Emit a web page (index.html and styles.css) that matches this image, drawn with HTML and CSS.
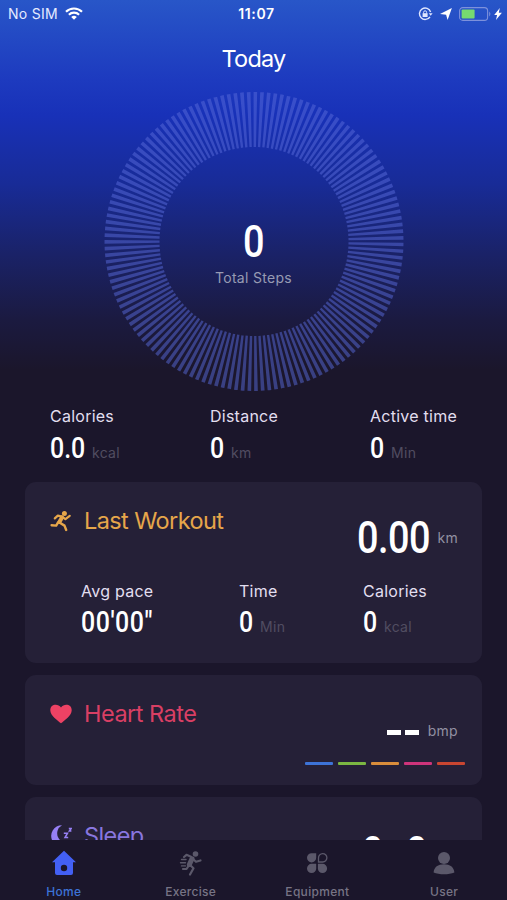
FILE: index.html
```html
<!DOCTYPE html>
<html lang="en">
<head>
  <meta charset="UTF-8" />
  <meta name="viewport" content="width=device-width, initial-scale=1.0" />
  <title>Today</title>
  <link rel="stylesheet" href="styles.css">
</head>
<body>
  <div class="app">
    <div class="screen">
      <div class="status">
        <div class="carrier">
          <span>No SIM</span>
          <svg width="18" height="13" viewBox="0 0 18 13" fill="none" stroke="#fff" stroke-width="2.2">
            <path d="M1 4.8a11.4 11.4 0 0 1 16 0" />
            <path d="M3.9 7.8a7.3 7.3 0 0 1 10.2 0" />
            <path d="M9 12.8 6.2 10a4 4 0 0 1 5.6 0z" fill="#fff" stroke="none" />
          </svg>
        </div>
        <div class="clock">11:07</div>
        <div class="indicators">
          <svg width="15" height="14" viewBox="0 0 15 14" fill="none" stroke="#dfe6ff" stroke-width="1.4">
            <path d="M12.6 5A5.7 5.7 0 1 0 12 9.8" />
            <path d="M10.8 6.2h3.8l-1.9 2.6z" fill="#dfe6ff" stroke="none" />
            <rect x="4.6" y="6.2" width="5" height="3.8" fill="#dfe6ff" stroke="none" />
            <path d="M5.6 6.5V5.3a1.5 1.5 0 0 1 3 0v1.2" stroke-width="1" />
          </svg>
          <svg class="arrow" width="12" height="12" viewBox="0 0 12 12" fill="#fff"><path d="M11.9.1 7.6 12 6.1 6.8 0 5.9z" /></svg>
          <svg class="battery" width="32" height="14" viewBox="0 0 32 14">
            <rect x=".6" y=".6" width="28" height="12.8" rx="3.2" fill="none" stroke="#7d91dc" stroke-width="1.1" />
            <rect x="2.6" y="2.6" width="13" height="8.8" rx="1" fill="#76da70" />
            <path d="M30.2 4.6q2.4 2.4 0 4.8z" fill="#7d91dc" />
          </svg>
          <svg class="bolt" width="8" height="12" viewBox="0 0 8 12" fill="#fff"><path d="M5.8 0 .2 6.9h2.9L2 12l5.9-7.2H4.8z" /></svg>
        </div>
      </div>

      <h1>Today</h1>

      <div class="ring">
        <svg width="300" height="300" viewBox="0 0 300 300">
          <circle cx="150" cy="149.5" r="122" pathLength="278" />
        </svg>
        <div class="ring-text">
          <div class="num big">0</div>
          <div class="steps">Total Steps</div>
        </div>
      </div>

      <div class="stats">
        <div class="stat">
          <div class="label">Calories</div>
          <div class="value"><span class="num n3">0.0</span><span class="unit">kcal</span></div>
        </div>
        <div class="stat">
          <div class="label">Distance</div>
          <div class="value"><span class="num">0</span><span class="unit">km</span></div>
        </div>
        <div class="stat">
          <div class="label">Active time</div>
          <div class="value"><span class="num">0</span><span class="unit">Min</span></div>
        </div>
      </div>

      <div class="card workout">
        <div class="card-head">
          <svg width="22" height="22" viewBox="0 0 22 22" fill="none" stroke="#e6a64a" stroke-width="2.4" stroke-linecap="round" stroke-linejoin="round">
            <circle cx="14.4" cy="3.4" r="2.5" fill="#e6a64a" stroke="none" />
            <path d="M4.8 8.4 7.8 5.6 12 6.6 15.4 9.2 19.7 5.8" stroke-width="2.2" />
            <path d="M12 7.4 9.4 12" stroke-width="4" />
            <path d="M9.4 12.5 14.5 15.6 16.2 20M8.2 12.2 6.2 15.6 1.6 15.2" stroke-width="2.4" />
          </svg>
          <h2>Last Workout</h2>
        </div>
        <div class="total">
          <span class="num big n4">0.00</span><span class="unit">km</span>
        </div>
        <div class="stats">
          <div class="stat">
            <div class="label">Avg pace</div>
            <div class="value"><span class="num n6">00'00"</span></div>
          </div>
          <div class="stat">
            <div class="label">Time</div>
            <div class="value"><span class="num">0</span><span class="unit">Min</span></div>
          </div>
          <div class="stat">
            <div class="label">Calories</div>
            <div class="value"><span class="num">0</span><span class="unit">kcal</span></div>
          </div>
        </div>
      </div>

      <div class="card heart">
        <div class="card-head">
          <svg width="22" height="22" viewBox="0 0 22 22" fill="#ed4264"><path d="M11 20.3C7.5 17.3.3 12.7.3 7.2.3 1 8 .1 11 4.6c3-4.5 10.7-3.6 10.7 2.6 0 5.5-7.2 10.1-10.7 13.1z" /></svg>
          <h2>Heart Rate</h2>
        </div>
        <div class="total">
          <span class="dashes"><i></i><i></i></span><span class="unit">bmp</span>
        </div>
        <div class="zones">
          <span class="blue"></span>
          <span class="green"></span>
          <span class="orange"></span>
          <span class="pink"></span>
          <span class="red"></span>
        </div>
      </div>

      <div class="card sleep">
        <div class="card-head">
          <svg width="22" height="22" viewBox="0 0 22 22" fill="#9780f5">
            <path d="M12 .2A10.7 10.7 0 1 0 21 16.5 9.3 9.3 0 0 1 12 .2z" />
            <path d="M13.8 8.2h3.7l-2.5 4.3h3.2M18.8 3.5h2.4l-1.8 2.4h2" fill="none" stroke="#9780f5" stroke-width="1.5" />
          </svg>
          <h2>Sleep</h2>
        </div>
        <div class="total"><span class="num big">0</span><span class="num big">0</span></div>
      </div>
    </div>

    <nav>
      <a class="active">
        <svg width="26" height="26" viewBox="0 0 26 26">
          <path d="M13 .8 1 12.3h3V23q0 2 2 2h14q2 0 2-2V12.3h3z" fill="#4360f4" />
          <circle cx="13" cy="18" r="3.2" fill="#1b162b" />
        </svg>
        <span>Home</span>
      </a>
      <a>
        <svg width="26" height="26" viewBox="0 0 26 26" fill="none" stroke="#5b586a" stroke-width="2.2" stroke-linecap="round" stroke-linejoin="round">
          <circle cx="17.5" cy="4" r="2.8" fill="#5b586a" stroke="none" />
          <path d="m14 8.8-2.6 5.7" stroke-width="5" />
          <path d="M13 6.7 8.5 4.8 6 7M15.5 9.5l2.5 2.3 4.500-1.300M12 15l3.500 3.200-3.500 6.300M10.500 16 8.500 19 5 19" />
          <path d="M3.500 9.500H8M2.500 12.700h5M3.500 15.900h4" stroke-width="1.400" />
        </svg>
        <span>Exercise</span>
      </a>
      <a>
        <svg width="26" height="26" viewBox="0 0 26 26" fill="#5b586a">
          <path d="M7.600 3.200h4.600v4.600a4.600 4.600 0 1 1-4.600-4.600z" />
          <path d="M14.500 12V7.900a4.200 4.200 0 1 1 4.200 4.100z" fill="none" stroke="#5b586a" stroke-width="1.300" />
          <path d="M7.600 13.800h4.600v4.600a4.600 4.600 0 1 1-4.600-4.600z" />
          <path d="M13.900 13.800h4.600a4.600 4.600 0 1 1-4.600 4.600z" />
        </svg>
        <span>Equipment</span>
      </a>
      <a>
        <svg width="26" height="26" viewBox="0 0 26 26" fill="#5b586a">
          <circle cx="13" cy="8" r="6" />
          <path d="M2.600 22.500C3 17 7 14.200 13 14.200s10 2.800 10.400 8.300c-5.500 2.400-15.300 2.400-20.800 0z" />
        </svg>
        <span>User</span>
      </a>
    </nav>
  </div>
</body>
</html>
```

FILE: styles.css
```css
* {
  box-sizing: border-box;
}

body {
  margin: 0;
  font-family: Inter, "Liberation Sans", sans-serif;
  background: #1b162b;
  color: #fff;
}

.app {
  height: 900px;
  display: flex;
  flex-direction: column;
  overflow: hidden;
  background: linear-gradient(#2856c8 0, #1d3abf 80px, #1831b8 115px, #182b96 185px, #1a2267 255px, #1b1a40 320px, #1b162b 370px);
}

.screen {
  height: 840px;
  overflow: hidden;
}

.status {
  height: 27px;
  padding: 0 5px 0 8px;
  display: grid;
  grid-template-columns: 1fr auto 1fr;
  align-items: center;
  font-size: 14px;
}

.carrier,
.indicators {
  display: flex;
  align-items: center;
}

.carrier {
  gap: 7px;
  letter-spacing: 0.3px;
  color: #e4eaff;
}

.clock {
  padding-left: 3px;
  font-weight: 600;
  letter-spacing: 0.6px;
}

.indicators {
  justify-content: flex-end;
}

.arrow {
  margin-left: 7px;
}

.battery {
  margin-left: 7px;
}

.bolt {
  margin-left: 3px;
}

h1 {
  margin: 17px 0 0;
  font-size: 23.5px;
  line-height: 30px;
  font-weight: 400;
  letter-spacing: -0.8px;
  text-align: center;
}

.ring {
  width: 300px;
  height: 300px;
  margin: 17.5px auto 0;
  display: grid;
}

.ring > * {
  grid-area: 1 / 1;
}

.ring circle {
  fill: none;
  stroke: rgba(88, 106, 218, 0.5);
  stroke-width: 55;
  stroke-dasharray: 1.1 0.9;
  stroke-dashoffset: -0.35;
}

.ring-text {
  display: flex;
  flex-direction: column;
  align-items: center;
  padding-top: 128px;
}

.steps {
  margin-top: 4px;
  font-size: 14px;
  line-height: 20px;
  letter-spacing: 0.3px;
  color: #979bb3;
}

/* condensed digits */
.num {
  display: inline-block;
  width: 14px;
  font-family: Roboto, sans-serif;
  font-weight: 500;
  font-size: 29px;
  line-height: 30px;
  white-space: nowrap;
  transform: scaleX(0.86);
  transform-origin: left;
}

.num.n3 {
  width: 35px;
}

.num.n6 {
  width: 74px;
  letter-spacing: 0.6px;
}

.num.big {
  width: 21px;
  font-size: 44px;
  line-height: 44px;
}

.num.big.n4 {
  width: 73px;
  letter-spacing: -0.6px;
}

.stats {
  display: grid;
  grid-template-columns: 160px 160px 1fr;
  padding: 13px 0 0 50px;
}

.label {
  font-size: 16px;
  line-height: 22px;
  letter-spacing: 0.25px;
  color: #e2dff0;
}

.value {
  display: flex;
  align-items: baseline;
  margin-top: 6px;
}

.unit {
  margin-left: 7px;
  font-size: 14px;
  letter-spacing: 0.3px;
  color: #514d61;
}

.card {
  width: 457px;
  margin: 0 0 12px 25px;
  padding: 0 24px 0 25px;
  border-radius: 11px;
  background: #252037;
}

.card-head {
  display: flex;
  align-items: center;
  gap: 12px;
  padding-top: 23px;
}

h2 {
  margin: 0;
  font-size: 23.5px;
  line-height: 32px;
  font-weight: 400;
  letter-spacing: -0.6px;
}

.total {
  display: flex;
  justify-content: flex-end;
  align-items: center;
}

.total .unit {
  color: #9290a2;
}

.workout {
  height: 181px;
  margin-top: 19px;
}

.workout h2 {
  color: #e6a64a;
}

.workout .total {
  margin-top: -21px;
}

.workout .stats {
  grid-template-columns: 158px 124px 1fr;
  padding: 20px 0 0 31px;
}

.workout .value {
  margin-top: 5px;
}

.heart {
  height: 110px;
}

.heart h2 {
  letter-spacing: -0.5px;
  color: #d93f64;
}

.dashes {
  display: flex;
  gap: 4px;
  margin-top: 4px;
}

.dashes i {
  width: 14px;
  height: 5px;
  background: #fff;
}

.heart .unit {
  margin-left: 9px;
}

.heart .total {
  margin-top: -8px;
}

.zones {
  display: flex;
  justify-content: flex-end;
  gap: 5px;
  margin: 23px -7px 0 0;
}

.zones span {
  width: 28px;
  height: 3px;
  border-radius: 1px;
}

.blue { background: #3d73d7; }
.green { background: #7bb742; }
.orange { background: #d98d3b; }
.pink { background: #ce347b; }
.red { background: #c94631; }

.sleep {
  height: 110px;
}

.sleep h2 {
  color: #8876df;
}

.sleep .total {
  gap: 23px;
  margin: -21px 31px 0 0;
}

nav {
  height: 60px;
  display: grid;
  grid-template-columns: repeat(4, 1fr);
  background: #1b162b;
}

nav a {
  display: flex;
  flex-direction: column;
  align-items: center;
  padding: 10px 0 0 1px;
  font-size: 12px;
  line-height: 16px;
  font-weight: 500;
  letter-spacing: 0.3px;
  color: #777485;
}

nav span {
  margin-top: 8px;
}

nav .active {
  color: #3d73d7;
}
```
